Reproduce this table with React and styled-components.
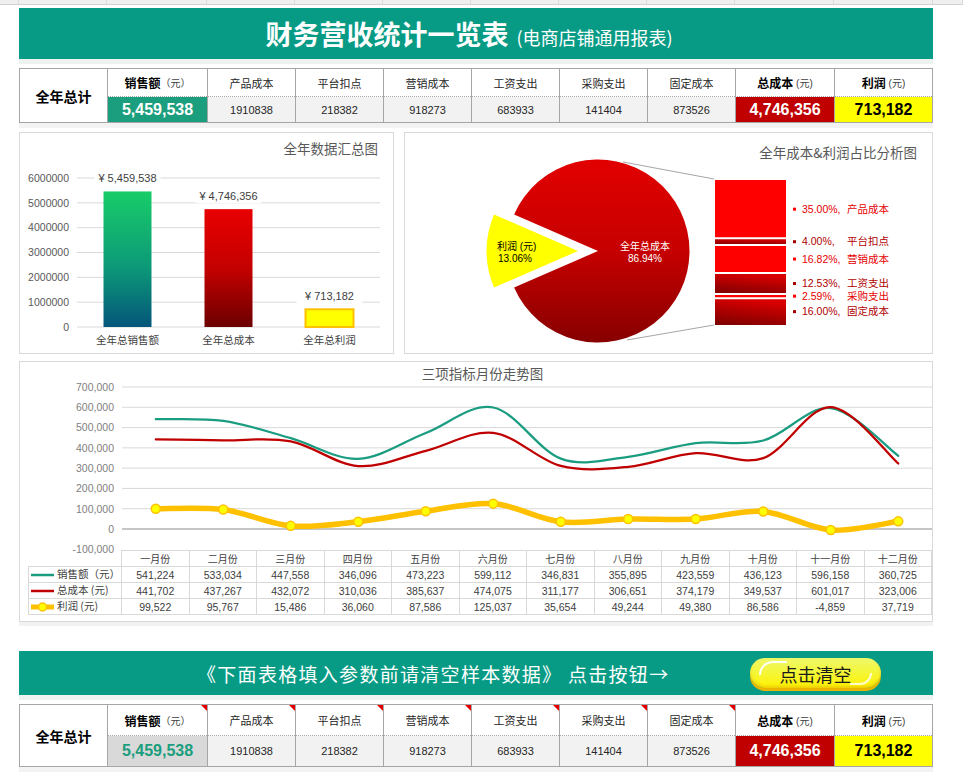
import React from "react";
import styled, { createGlobalStyle, css } from "styled-components";

const GlobalStyle = createGlobalStyle`
  html, body {
    margin: 0;
    padding: 0;
    overflow: hidden;
    background: #fff;
  }
  body {
    font-family: "Liberation Sans", "Noto Sans CJK SC", sans-serif;
    color: #262626;
  }
`;

const COLS = "88px 100px repeat(6, 88px) 99px 99px";
const TEAL = "#079b85";

const headers = [
  { name: "销售额", unit: "（元）", strong: true },
  { name: "产品成本" },
  { name: "平台扣点" },
  { name: "营销成本" },
  { name: "工资支出" },
  { name: "采购支出" },
  { name: "固定成本" },
  { name: "总成本", unit: " (元)", strong: true },
  { name: "利润", unit: " (元)", strong: true },
];

const values = [
  "5,459,538",
  "1910838",
  "218382",
  "918273",
  "683933",
  "141404",
  "873526",
  "4,746,356",
  "713,182",
];

const months = [
  "一月份", "二月份", "三月份", "四月份", "五月份", "六月份",
  "七月份", "八月份", "九月份", "十月份", "十一月份", "十二月份",
];

const series = [
  {
    label: "销售额（元）",
    color: "#1a9c80",
    width: 2.25,
    data: [541224, 533034, 447558, 346096, 473223, 599112, 346831, 355895, 423559, 436123, 596158, 360725],
  },
  {
    label: "总成本 (元)",
    color: "#c00000",
    width: 2.25,
    data: [441702, 437267, 432072, 310036, 385637, 474075, 311177, 306651, 374179, 349537, 601017, 323006],
  },
  {
    label: "利润 (元)",
    color: "#ffc000",
    width: 5.5,
    marker: true,
    data: [99522, 95767, 15486, 36060, 87586, 125037, 35654, 49244, 49380, 86586, -4859, 37719],
  },
];

const costParts = [
  { pct: 35.0, name: "产品成本", dark: false },
  { pct: 4.0, name: "平台扣点", dark: true },
  { pct: 16.82, name: "营销成本", dark: false },
  { pct: 12.53, name: "工资支出", dark: true },
  { pct: 2.59, name: "采购支出", dark: false },
  { pct: 16.0, name: "固定成本", dark: true },
];

const fmt = (n) => n.toLocaleString("en-US");
const f = (n) => n.toFixed(1);

function smoothPath(pts) {
  let d = `M${f(pts[0][0])},${f(pts[0][1])}`;
  for (let i = 0; i < pts.length - 1; i++) {
    const p0 = pts[i - 1] || pts[i];
    const p1 = pts[i];
    const p2 = pts[i + 1];
    const p3 = pts[i + 2] || p2;
    const c1x = p1[0] + (p2[0] - p0[0]) / 6;
    const c1y = p1[1] + (p2[1] - p0[1]) / 6;
    const c2x = p2[0] - (p3[0] - p1[0]) / 6;
    const c2y = p2[1] - (p3[1] - p1[1]) / 6;
    d += ` C${f(c1x)},${f(c1y)} ${f(c2x)},${f(c2y)} ${f(p2[0])},${f(p2[1])}`;
  }
  return d;
}

export default function App() {
  return (
    <>
      <GlobalStyle />
      <SheetEdge>
        {Array.from({ length: 12 }).map((_, i) => (
          <EdgeCell key={i} />
        ))}
      </SheetEdge>
      <Page>
        <Banner>
          <Heading>
            财务营收统计一览表<HeadingNote>(电商店铺通用报表)</HeadingNote>
          </Heading>
        </Banner>

        <SummaryTable rows="28px 25px" salesTone="green" />

        <ChartRow>
          <Panel $h={222}>
            <ChartTitle $h={28} $pt={6}>全年数据汇总图</ChartTitle>
            <TotalsChart />
          </Panel>
          <Panel $h={222}>
            <ChartTitle $h={28} $pt={10}>全年成本&amp;利润占比分析图</ChartTitle>
            <ShareChart />
          </Panel>
        </ChartRow>

        <TrendPanel $h={261}>
          <ChartTitle $h={22} $pt={2} $align="center" $pl={13}>
            三项指标月份走势图
          </ChartTitle>
          <TrendChart />
          <DataGrid>
            <Corner />
            {months.map((m) => (
              <MonthCell key={m}>{m}</MonthCell>
            ))}
            {series.map((s) => (
              <React.Fragment key={s.label}>
                <LegendCell>
                  <svg width="26" height="10">
                    <line x1="2" y1="5" x2="25" y2="5" stroke={s.color} strokeWidth={s.marker ? 5 : 2.5} />
                    {s.marker && <circle cx="13.5" cy="5" r="4" fill="#ffff00" stroke="#ffc000" strokeWidth="1.5" />}
                  </svg>
                  {s.label}
                </LegendCell>
                {s.data.map((v, i) => (
                  <NumCell key={i}>{fmt(v)}</NumCell>
                ))}
              </React.Fragment>
            ))}
          </DataGrid>
        </TrendPanel>

        <NoticeBar>
          <NoticeText>《下面表格填入参数前请清空样本数据》 点击按钮→</NoticeText>
          <ClearButton type="button">点击清空</ClearButton>
        </NoticeBar>

        <SummaryTable rows="31px 30px" salesTone="gray" notes />

        <StubRow>
          {Array.from({ length: 8 }).map((_, i) => (
            <StubCell key={i} />
          ))}
          <StubCell $tone="red" />
          <StubCell $tone="yellow" />
        </StubRow>
      </Page>
    </>
  );
}

function SummaryTable({ rows, salesTone, notes }) {
  const tones = [salesTone, "plain", "plain", "plain", "plain", "plain", "plain", "red", "yellow"];
  return (
    <Summary $rows={rows}>
      <TotalLabel>全年总计</TotalLabel>
      {headers.map((h, i) => (
        <HeadCell key={h.name} $strong={h.strong} $note={notes && i < 7}>
          {h.name}
          {h.unit && <Unit>{h.unit}</Unit>}
        </HeadCell>
      ))}
      {values.map((v, i) => (
        <ValueCell key={i} $tone={tones[i]}>
          {v}
        </ValueCell>
      ))}
    </Summary>
  );
}

function TotalsChart() {
  const y = (v) => 166 - (v / 1e6) * 24.83;
  const bars = [
    { label: "全年总销售额", value: 5459538, fill: "url(#gSales)" },
    { label: "全年总成本", value: 4746356, fill: "url(#gCost)" },
    { label: "全年总利润", value: 713182, fill: "#ffff00", stroke: "#ffc000" },
  ];
  return (
    <Canvas width="373" height="192">
      <defs>
        <linearGradient id="gSales" x1="0" y1="0" x2="0" y2="1">
          <stop offset="0" stopColor="#18cc68" />
          <stop offset="0.55" stopColor="#0d9a78" />
          <stop offset="1" stopColor="#04567a" />
        </linearGradient>
        <linearGradient id="gCost" x1="0" y1="0" x2="0" y2="1">
          <stop offset="0" stopColor="#e80000" />
          <stop offset="0.5" stopColor="#c40000" />
          <stop offset="1" stopColor="#6c0000" />
        </linearGradient>
      </defs>
      {[0, 1, 2, 3, 4, 5, 6].map((k) => (
        <g key={k}>
          <line x1="57" x2="360" y1={y(k * 1e6)} y2={y(k * 1e6)} stroke="#d9d9d9" strokeWidth="1" />
          <text x="49" y={y(k * 1e6) + 3.8} textAnchor="end" fontSize="10.5" fill="#595959">
            {k === 0 ? "0" : `${k}000000`}
          </text>
        </g>
      ))}
      {bars.map((b, i) => {
        const cx = 57 + 101 * (i + 0.5);
        const top = y(b.value);
        const text = `¥ ${fmt(b.value)}`;
        return (
          <g key={b.label}>
            <rect
              x={cx - 24}
              y={top}
              width="48"
              height={166 - top}
              fill={b.fill}
              stroke={b.stroke || "none"}
              strokeWidth={b.stroke ? 2 : 0}
            />
            <rect x={cx - 33} y={top - 21} width="66" height="15" fill="#fff" />
            <text x={cx} y={top - 9.5} textAnchor="middle" fontSize="11" fill="#404040">
              {text}
            </text>
            <text x={cx} y="183" textAnchor="middle" fontSize="10.5" fill="#404040">
              {b.label}
            </text>
          </g>
        );
      })}
    </Canvas>
  );
}

function ShareChart() {
  const cx = 193;
  const cy = 90;
  const r = 91.5;
  const a = (23.5 * Math.PI) / 180;
  const px = cx - r * Math.cos(a);
  const py1 = cy - r * Math.sin(a);
  const py2 = cy + r * Math.sin(a);
  const off = 20;
  const big = `M${cx},${cy} L${f(px)},${f(py1)} A${r},${r} 0 1 1 ${f(px)},${f(py2)} Z`;
  const small = `M${cx - off},${cy} L${f(px - off)},${f(py1)} A${r},${r} 0 0 0 ${f(px - off)},${f(py2)} Z`;

  const total = costParts.reduce((s, p) => s + p.pct, 0);
  const scale = 145 / total;
  let acc = 19;
  const segs = costParts.map((p) => {
    const s = { ...p, y: acc, h: p.pct * scale };
    acc += s.h;
    return s;
  });

  return (
    <Canvas width="527" height="192">
      <defs>
        <linearGradient id="gPie" x1="0" y1="0" x2="0" y2="1">
          <stop offset="0" stopColor="#e20000" />
          <stop offset="0.5" stopColor="#c60000" />
          <stop offset="1" stopColor="#870000" />
        </linearGradient>
        <linearGradient id="gSeg" x1="0.3" y1="0" x2="0" y2="1">
          <stop offset="0" stopColor="#d80000" />
          <stop offset="1" stopColor="#7a0000" />
        </linearGradient>
      </defs>
      <line x1="218" y1="1" x2="309" y2="18" stroke="#a6a6a6" strokeWidth="1" />
      <line x1="222" y1="179" x2="309" y2="164" stroke="#a6a6a6" strokeWidth="1" />
      <path d={big} fill="url(#gPie)" />
      <path d={small} fill="#ffff00" />
      <text x="92" y="88.5" fontSize="10" fill="#000">利润 (元)</text>
      <text x="93" y="100.5" fontSize="10" fill="#000">13.06%</text>
      <text x="240" y="88.5" textAnchor="middle" fontSize="10" fill="#fff">全年总成本</text>
      <text x="240" y="100.5" textAnchor="middle" fontSize="10" fill="#fff">86.94%</text>

      {segs.map((s) => (
        <rect key={s.name} x="310" y={s.y} width="71" height={s.h} fill={s.dark ? "url(#gSeg)" : "#ff0000"} />
      ))}
      {segs.slice(1).map((s) => (
        <line key={s.name} x1="310" x2="381" y1={s.y} y2={s.y} stroke="#fff" strokeWidth="2" />
      ))}
      {segs.map((s) => {
        const mid = s.y + s.h / 2;
        const color = s.dark ? "#b00000" : "#e60000";
        return (
          <g key={s.name}>
            <rect x="388" y={mid - 1.5} width="3" height="3" fill={s.dark ? "#a00000" : "#ff0000"} />
            <text x="397" y={mid + 3.6} fontSize="10.5" fill={color}>
              {`${s.pct.toFixed(2)}%,`}
            </text>
            <text x="442" y={mid + 3.6} fontSize="10.5" fill={color}>
              {s.name}
            </text>
          </g>
        );
      })}
    </Canvas>
  );
}

function TrendChart() {
  const y = (v) => 145 - (v * 142) / 700000;
  const x = (i) => 102 + 67.5 * (i + 0.5);
  const ticks = [700000, 600000, 500000, 400000, 300000, 200000, 100000, 0, -100000];
  return (
    <Canvas width="912" height="166">
      {ticks.map((t) => (
        <g key={t}>
          {t > 0 && <line x1="102" x2="912" y1={y(t)} y2={y(t)} stroke="#d9d9d9" strokeWidth="1" />}
          {t === 0 && <line x1="102" x2="912" y1={y(t)} y2={y(t)} stroke="#8c8c8c" strokeWidth="1" />}
          <text x="94" y={y(t) + 3.8} textAnchor="end" fontSize="10.5" fill="#7f7f7f">
            {fmt(t)}
          </text>
        </g>
      ))}
      {series.map((s) => {
        const pts = s.data.map((v, i) => [x(i), y(v)]);
        return (
          <g key={s.label}>
            <path d={smoothPath(pts)} fill="none" stroke={s.color} strokeWidth={s.width} strokeLinecap="round" />
            {s.marker &&
              pts.map((p, i) => (
                <circle key={i} cx={p[0]} cy={p[1]} r="4.5" fill="#ffff00" stroke="#ffc000" strokeWidth="1.5" />
              ))}
          </g>
        );
      })}
    </Canvas>
  );
}

const SheetEdge = styled.div`
  display: grid;
  grid-template-columns: 19px ${COLS} 1fr;
  height: 4px;
  background: #efefef;
  border-bottom: 1px solid #d2d2d2;
`;

const EdgeCell = styled.div`
  border-right: 1px solid #dadada;
`;

const Page = styled.div`
  width: 914px;
  margin-left: 19px;
  display: flex;
  flex-direction: column;
`;

const Banner = styled.div`
  height: 51px;
  margin-top: 3px;
  background: ${TEAL};
  display: flex;
  align-items: center;
  justify-content: center;
  padding-right: 14px;
  box-shadow: 0 5px 0 #eef3f2;
`;

const Heading = styled.h1`
  margin: 0;
  color: #fff;
  font-size: 27px;
  font-weight: bold;
  line-height: 1;
  font-family: "Noto Sans CJK SC", sans-serif;
`;

const HeadingNote = styled.span`
  font-size: 18px;
  font-weight: normal;
  margin-left: 8px;
`;

const Summary = styled.div`
  display: grid;
  grid-template-columns: 87px 100px repeat(6, 88px) 99px 98px;
  grid-template-rows: ${(p) => p.$rows};
  margin-top: 9px;
  border: 1px solid #a6a6a6;
  box-shadow: 0 5px 0 #f3f3f3;
  background: #fff;
`;

const TotalLabel = styled.div`
  grid-row: span 2;
  display: flex;
  align-items: center;
  justify-content: center;
  font-size: 14px;
  font-weight: bold;
  color: #000;
  font-family: "Noto Sans CJK SC", sans-serif;
`;

const HeadCell = styled.div`
  position: relative;
  display: flex;
  align-items: center;
  justify-content: center;
  border-left: 1px solid #a6a6a6;
  border-bottom: 1px dotted #a6a6a6;
  font-size: ${(p) => (p.$strong ? "12px" : "11px")};
  font-weight: ${(p) => (p.$strong ? "bold" : "normal")};
  color: ${(p) => (p.$strong ? "#000" : "#262626")};
  white-space: pre;
  ${(p) =>
    p.$note &&
    css`
      &::after {
        content: "";
        position: absolute;
        top: 0;
        right: 0;
        border-left: 6px solid transparent;
        border-top: 6px solid #e00000;
      }
    `}
`;

const Unit = styled.span`
  font-size: 10px;
  font-weight: normal;
  color: #404040;
`;

const valueTones = {
  plain: { bg: "#f2f2f2", fg: "#262626", big: false },
  green: { bg: "#1b9e7d", fg: "#fff", big: true },
  gray: { bg: "#d9d9d9", fg: "#1b9e7d", big: true },
  red: { bg: "#c00000", fg: "#fff", big: true },
  yellow: { bg: "#ffff00", fg: "#000", big: true },
};

const ValueCell = styled.div`
  display: flex;
  align-items: center;
  justify-content: center;
  border-left: 1px solid #a6a6a6;
  background: ${(p) => valueTones[p.$tone].bg};
  color: ${(p) => valueTones[p.$tone].fg};
  font-size: ${(p) => (valueTones[p.$tone].big ? "16px" : "11px")};
  font-weight: ${(p) => (valueTones[p.$tone].big ? "bold" : "normal")};
`;

const ChartRow = styled.div`
  display: grid;
  grid-template-columns: 375px 529px;
  gap: 10px;
  margin-top: 9px;
`;

const Panel = styled.section`
  box-sizing: border-box;
  height: ${(p) => p.$h}px;
  border: 1px solid #d9d9d9;
  background: #fff;
  display: flex;
  flex-direction: column;
`;

const TrendPanel = styled(Panel)`
  margin-top: 7px;
  box-shadow: 0 4px 0 #f2f2f2;
`;

const ChartTitle = styled.div`
  box-sizing: border-box;
  flex: none;
  height: ${(p) => p.$h}px;
  padding: ${(p) => p.$pt}px 15px 0 ${(p) => p.$pl || 0}px;
  line-height: 18px;
  font-size: 13.5px;
  color: #595959;
  text-align: ${(p) => p.$align || "right"};
  font-family: "Noto Sans CJK SC", sans-serif;
  ${(p) =>
    p.$align === "center" &&
    css`
      padding-right: 0;
    `}
`;

const Canvas = styled.svg`
  display: block;
  flex: none;
  overflow: visible;
`;

const DataGrid = styled.div`
  display: grid;
  grid-template-columns: 94px repeat(12, 67.5px);
  grid-template-rows: 17px repeat(3, 16px);
  margin-left: 8px;
  font-size: 10.5px;
  color: #404040;
`;

const Corner = styled.div`
  border-right: 1px solid #d9d9d9;
  border-bottom: 1px solid #d9d9d9;
`;

const MonthCell = styled.div`
  border-top: 1px solid #d9d9d9;
  border-right: 1px solid #d9d9d9;
  border-bottom: 1px solid #d9d9d9;
  display: flex;
  align-items: center;
  justify-content: center;
  font-size: 10px;
  font-family: "Noto Sans CJK SC", sans-serif;
`;

const LegendCell = styled.div`
  border-left: 1px solid #d9d9d9;
  border-right: 1px solid #d9d9d9;
  border-bottom: 1px solid #d9d9d9;
  display: flex;
  align-items: center;
  gap: 2px;
  white-space: nowrap;
  font-family: "Noto Sans CJK SC", sans-serif;
  font-size: 10.5px;
  line-height: 1;
`;

const NumCell = styled.div`
  border-right: 1px solid #d9d9d9;
  border-bottom: 1px solid #d9d9d9;
  display: flex;
  align-items: center;
  justify-content: center;
`;

const NoticeBar = styled.div`
  height: 44px;
  margin-top: 29px;
  background: ${TEAL};
  display: flex;
  align-items: center;
  padding: 0 52px 0 178px;
  box-shadow: 0 5px 0 #eef3f2;
`;

const NoticeText = styled.span`
  color: #fff;
  font-size: 19px;
  letter-spacing: 1.3px;
  font-family: "Noto Sans CJK SC", sans-serif;
  white-space: nowrap;
`;

const ClearButton = styled.button`
  position: relative;
  margin-left: auto;
  width: 131px;
  height: 30px;
  border: none;
  border-radius: 15px;
  padding: 2px 0 0;
  background: linear-gradient(180deg, #eef86a 0%, #f4f63c 45%, #fff200 100%);
  box-shadow: 0 3px 0 #e8b500, inset 0 -2px 3px rgba(214, 160, 0, 0.45);
  font-family: "Noto Sans CJK SC", sans-serif;
  font-size: 18px;
  color: #1a1a1a;
  cursor: pointer;

  &::before {
    content: "";
    position: absolute;
    left: 9px;
    top: 3px;
    width: 26px;
    height: 12px;
    border-top: 2px solid rgba(255, 255, 255, 0.95);
    border-left: 2px solid rgba(255, 255, 255, 0.95);
    border-top-left-radius: 14px;
  }

  &::after {
    content: "";
    position: absolute;
    right: 9px;
    bottom: 3px;
    width: 20px;
    height: 10px;
    border-bottom: 2px solid rgba(255, 255, 255, 0.8);
    border-right: 2px solid rgba(255, 255, 255, 0.8);
    border-bottom-right-radius: 12px;
  }
`;

const StubRow = styled.div`
  display: grid;
  grid-template-columns: ${COLS};
  height: 20px;
  margin-top: 11px;
  border-top: 1px solid #c9c9c9;
`;

const StubCell = styled.div`
  background: ${(p) => (p.$tone === "red" ? "#c00000" : p.$tone === "yellow" ? "#ffff00" : "#fff")};
  ${(p) =>
    p.$tone === "red" &&
    css`
      border-top: 1px dotted rgba(255, 255, 255, 0.8);
    `}
`;
